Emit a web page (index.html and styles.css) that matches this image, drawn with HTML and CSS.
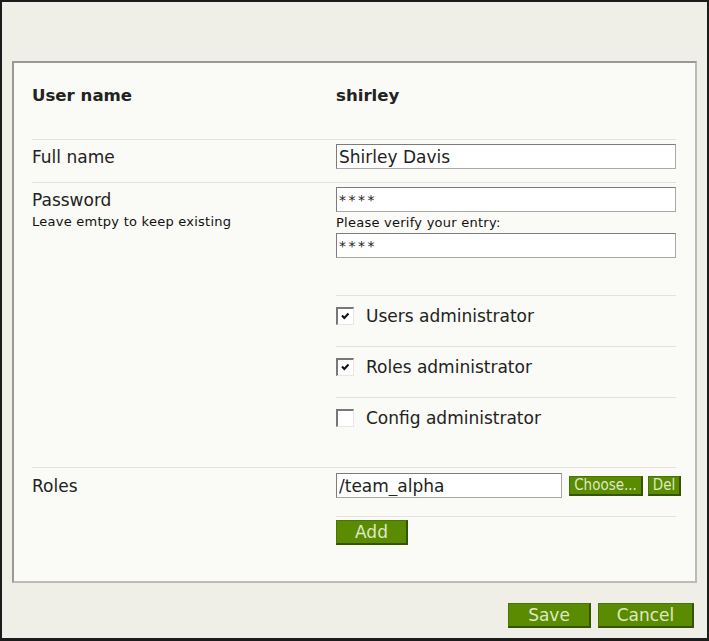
FILE: index.html
```html
<!DOCTYPE html>
<html>
<head>
<meta charset="utf-8">
<link rel="stylesheet" href="styles.css">
</head>
<body>
<div class="page">
  <div class="panel">
    <div class="row row-user">
      <div class="label strong">User name</div>
      <div class="field strong">shirley</div>
    </div>
    <div class="row row-full">
      <div class="label line">Full name</div>
      <div class="field"><input class="text" type="text" value="Shirley Davis"></div>
    </div>
    <div class="row row-pass">
      <div class="label">
        <div class="line">Password</div>
        <div class="hint">Leave emtpy to keep existing</div>
      </div>
      <div class="field">
        <input class="text pw" type="text" value="****">
        <div class="hint verify">Please verify your entry:</div>
        <input class="text pw" type="text" value="****">
        <div class="checks">
          <div class="check-row">
            <span class="cb"><svg viewBox="0 0 17 17" width="17" height="17"><path d="M5 7.5 L7.3 10 L11.5 5.5" fill="none" stroke="#111" stroke-width="2"/></svg></span>
            <span>Users administrator</span>
          </div>
          <div class="check-row">
            <span class="cb"><svg viewBox="0 0 17 17" width="17" height="17"><path d="M5 7.5 L7.3 10 L11.5 5.5" fill="none" stroke="#111" stroke-width="2"/></svg></span>
            <span>Roles administrator</span>
          </div>
          <div class="check-row">
            <span class="cb"></span>
            <span>Config administrator</span>
          </div>
        </div>
      </div>
    </div>
    <div class="row row-roles">
      <div class="label line">Roles</div>
      <div class="field">
        <div class="role-line">
          <input class="text role" type="text" value="/team_alpha">
          <button class="btn small choose">Choose...</button>
          <button class="btn small del">Del</button>
        </div>
        <div class="add-line">
          <button class="btn add">Add</button>
        </div>
      </div>
    </div>
  </div>
  <div class="actions">
    <button class="btn big save">Save</button>
    <button class="btn big cancel">Cancel</button>
  </div>
</div>
</body>
</html>
```
FILE: styles.css
```css
* { box-sizing: border-box; }
html, body { margin: 0; padding: 0; }
body {
  font-family: "DejaVu Sans", Verdana, sans-serif;
  color: #222;
  background: #efefe7;
}
.page {
  width: 709px;
  height: 641px;
  border: 2px solid #1c1c1c;
  border-bottom-width: 3px;
  background: #efefe7;
  padding-top: 59px;
}
.panel {
  margin-left: 10px;
  width: 685px;
  background: #fafaf6;
  border: 2px solid #bcbcb6;
  border-top-color: #9a9a94;
  border-left-color: #9a9a94;
  padding: 0 19px 0 18px;
}
.row {
  display: flex;
  border-top: 1px solid #e2e2da;
  font-size: 17px;
}
.row-user { border-top: none; height: 76px; padding-top: 23px; }
.label { width: 304px; flex: none; }
.field { width: 340px; flex: none; }
.strong { font-weight: bold; font-size: 16.6px; line-height: 20px; }
.line { line-height: 25px; padding-top: 1px; }
.row-full { padding: 4px 0 13px; }
.row-full .label { height: 25px; }
.row-pass { padding: 4px 0 19px; }
.row-roles { padding: 5px 0 36px; }
.hint {
  font-family: "DejaVu Sans", sans-serif;
  font-size: 13px;
  letter-spacing: 0.25px;
  line-height: 17px;
  color: #111;
}
.verify { line-height: 20px; padding-top: 1px; }
.text {
  display: block;
  flex: none;
  width: 340px;
  height: 25px;
  margin: 0;
  padding: 0 2px;
  border: 1px solid #a8a8a8;
  border-top-color: #7c7c7c;
  border-left-color: #7c7c7c;
  background: #fff;
  font-family: "DejaVu Sans", sans-serif;
  font-size: 17px;
  color: #222;
}
.pw { font-size: 14px; letter-spacing: 2.5px; }
.checks { margin-top: 37px; }
.check-row {
  display: flex;
  align-items: flex-start;
  gap: 12px;
  height: 51px;
  padding-top: 11px;
  border-top: 1px solid #e2e2da;
  line-height: 18px;
}
.cb {
  width: 18px;
  height: 18px;
  flex: none;
  background: #fff;
  border-top: 2px solid #777;
  border-left: 2px solid #777;
  border-right: 1px solid #e6e6e6;
  border-bottom: 1px solid #e6e6e6;
  display: block;
  overflow: hidden;
}
.cb svg { display: block; margin: -1px 0 0 -1px; }
.role-line { display: flex; align-items: center; height: 25px; width: 350px; }
.role { width: 226px; height: 25px; }
.btn {
  font-family: "DejaVu Sans", sans-serif;
  background: #5b8b00;
  color: #dfe8c6;
  border: 1px solid #4a730a;
  border-right: 2px solid #365500;
  border-bottom: 2px solid #365500;
  padding: 0;
  margin: 0;
  cursor: pointer;
  flex: none;
}
.small {
  font-family: "DejaVu Sans Condensed", "DejaVu Sans", sans-serif;
  font-size: 15px;
  height: 20px;
  line-height: 16px;
}
.choose { width: 74px; margin-left: 7px; }
.del { width: 33px; margin-left: 5px; }
.add-line {
  border-top: 1px solid #e2e2da;
  margin-top: 18px;
  padding-top: 3px;
}
.add { width: 72px; height: 25px; font-size: 17px; }
.actions {
  display: flex;
  justify-content: flex-end;
  gap: 7px;
  padding: 20px 13px 0 0;
}
.big { height: 25px; font-size: 17px; }
.save { width: 83px; }
.cancel { width: 96px; }
```
